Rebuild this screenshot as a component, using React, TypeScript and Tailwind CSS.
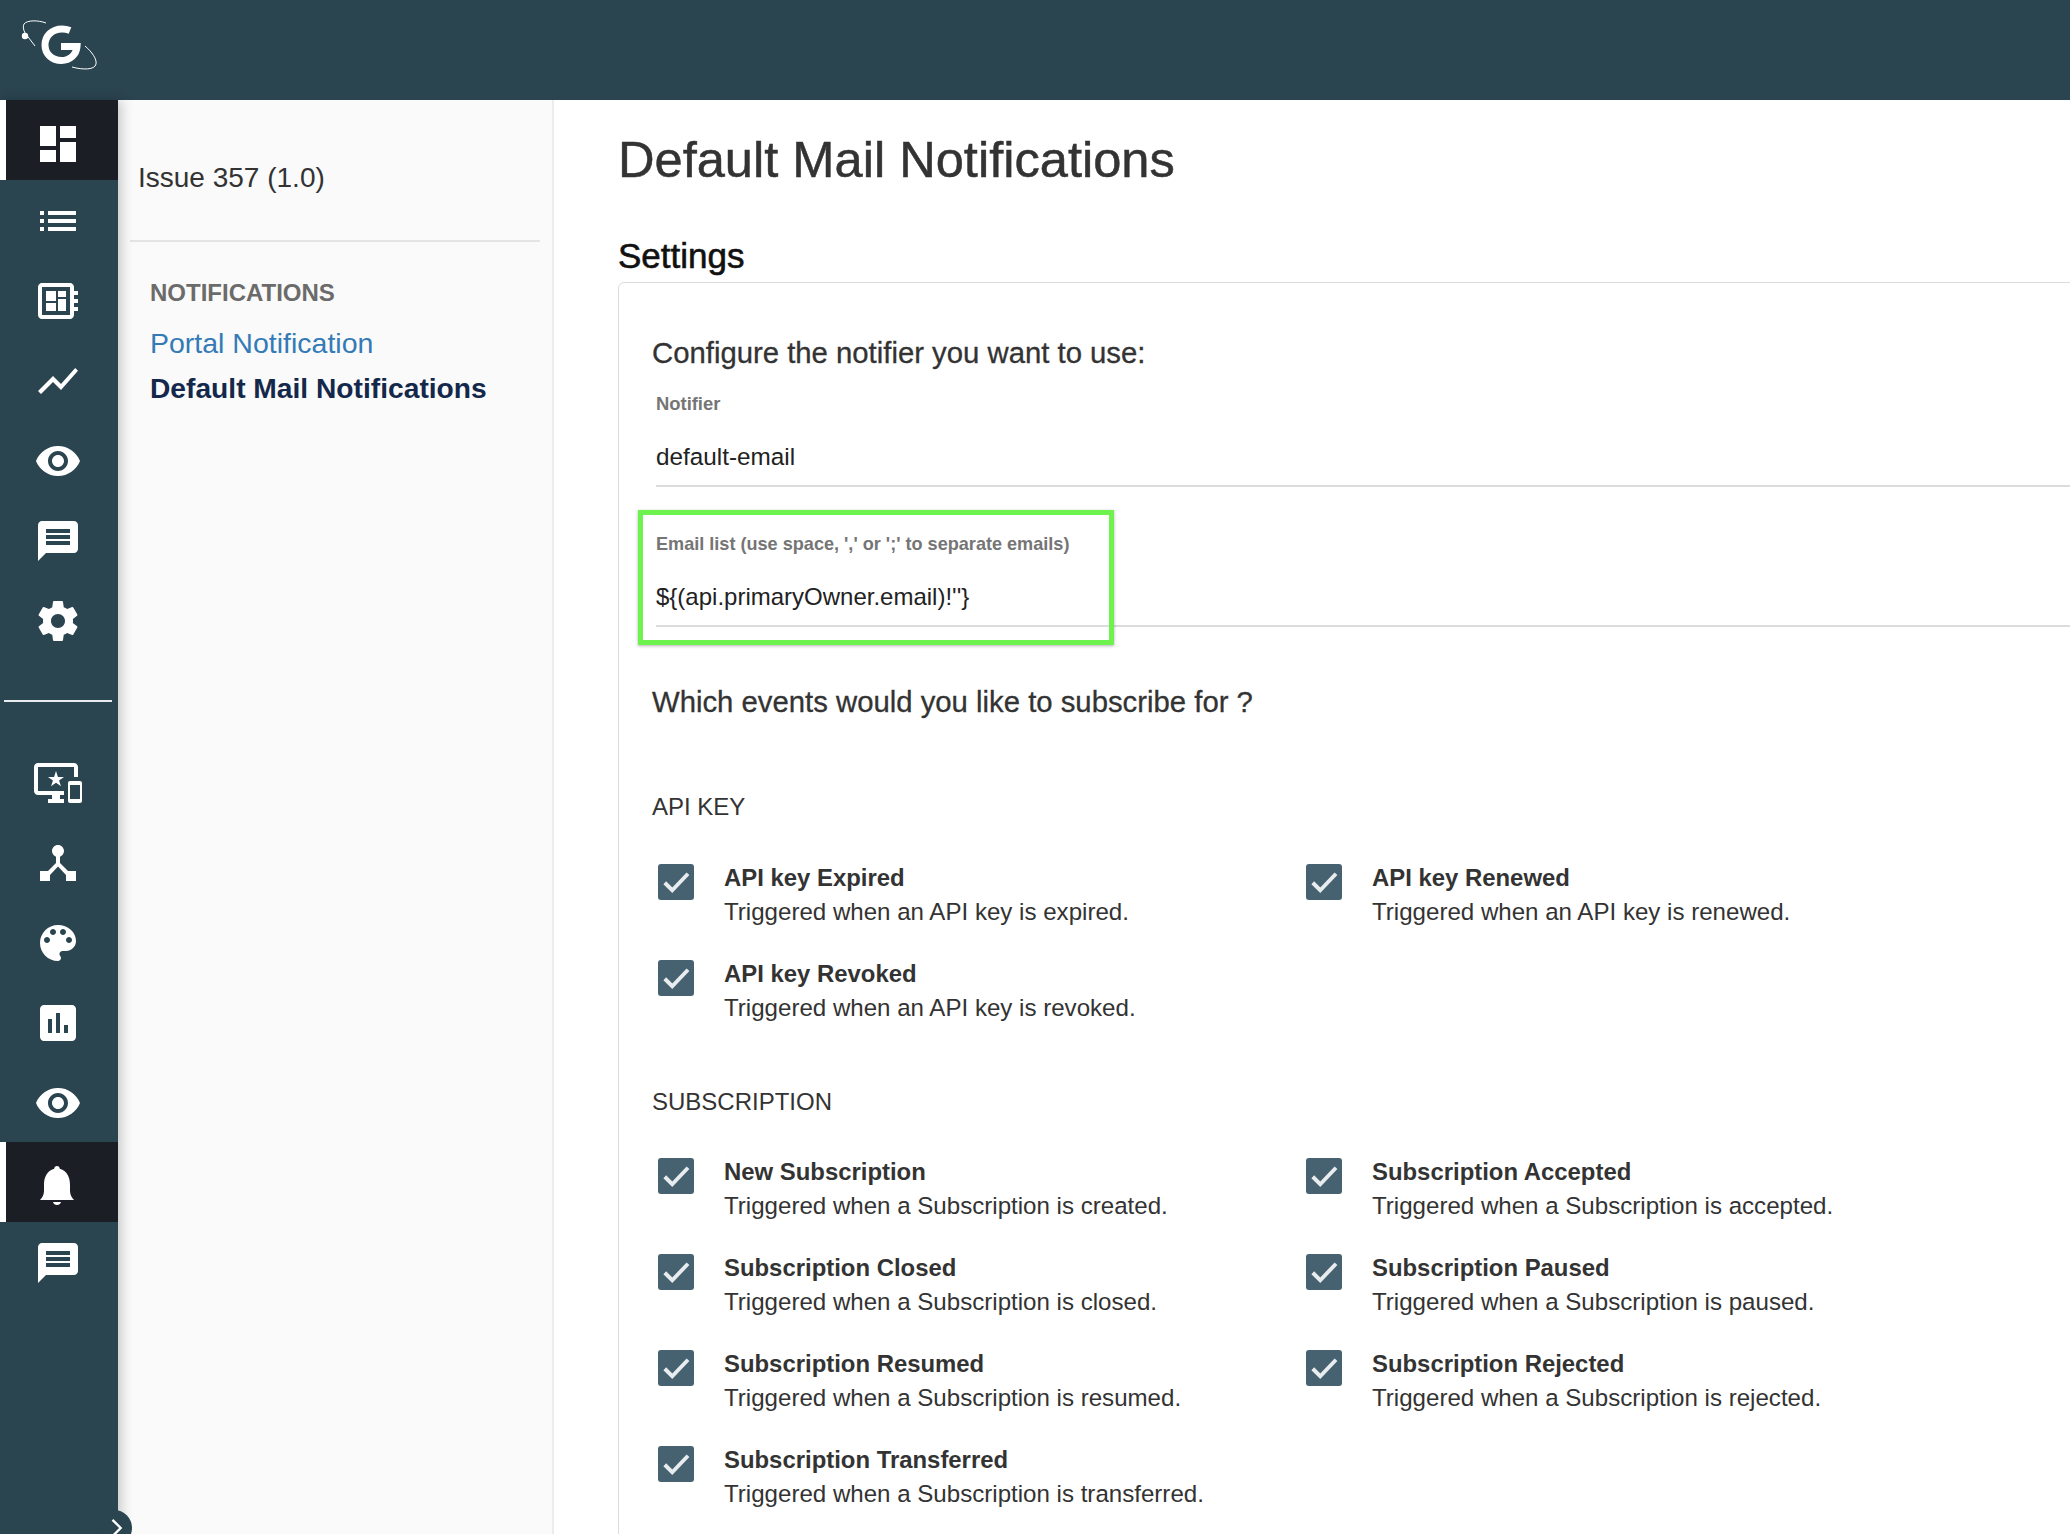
import React from "react";

const paths = {
  dashboard: "M3 13h8V3H3v10zm0 8h8v-6H3v6zm10 0h8V11h-8v10zm0-18v6h8V3h-8z",
  list: "M3 13h2v-2H3v2zm0 4h2v-2H3v2zm0-8h2V7H3v2zm4 4h14v-2H7v2zm0 4h14v-2H7v2zM7 7v2h14V7H7z",
  board: "M22 9V7h-2V5c0-1.1-.9-2-2-2H4c-1.1 0-2 .9-2 2v14c0 1.1.9 2 2 2h14c1.1 0 2-.9 2-2v-2h2v-2h-2v-2h2v-2h-2V9h2zm-4 10H4V5h14v14zM6 13h5v4H6zm6-6h4v3h-4zM6 7h5v5H6zm6 4h4v6h-4z",
  chart: "M3.5 18.49l6-6.01 4 4L22 6.92l-1.41-1.41-7.09 7.97-4-4L2 16.99z",
  eye: "M12 4.5C7 4.5 2.73 7.61 1 12c1.73 4.39 6 7.5 11 7.5s9.27-3.11 11-7.5c-1.73-4.39-6-7.5-11-7.5zM12 17c-2.76 0-5-2.24-5-5s2.24-5 5-5 5 2.24 5 5-2.24 5-5 5zm0-8c-1.66 0-3 1.34-3 3s1.34 3 3 3 3-1.34 3-3-1.34-3-3-3z",
  message: "M20 2H4c-1.1 0-1.99.9-1.99 2L2 22l4-4h14c1.1 0 2-.9 2-2V4c0-1.1-.9-2-2-2zm-2 12H6v-2h12v2zm0-3H6V9h12v2zm0-3H6V6h12v2z",
  settings: "M19.43 12.98c.04-.32.07-.64.07-.98s-.03-.66-.07-.98l2.11-1.65c.19-.15.24-.42.12-.64l-2-3.46c-.12-.22-.39-.3-.61-.22l-2.49 1c-.52-.4-1.08-.73-1.69-.98l-.38-2.65C14.46 2.18 14.25 2 14 2h-4c-.25 0-.46.18-.49.42l-.38 2.65c-.61.25-1.17.59-1.69.98l-2.49-1c-.23-.09-.49 0-.61.22l-2 3.46c-.13.22-.07.49.12.64l2.11 1.65c-.04.32-.07.65-.07.98s.03.66.07.98l-2.11 1.65c-.19.15-.24.42-.12.64l2 3.46c.12.22.39.3.61.22l2.49-1c.52.4 1.08.73 1.69.98l.38 2.65c.03.24.24.42.49.42h4c.25 0 .46-.18.49-.42l.38-2.65c.61-.25 1.17-.59 1.69-.98l2.49 1c.23.09.49 0 .61-.22l2-3.46c.12-.22.07-.49-.12-.64l-2.11-1.65zM12 15.5c-1.93 0-3.5-1.57-3.5-3.5s1.57-3.5 3.5-3.5 3.5 1.57 3.5 3.5-1.57 3.5-3.5 3.5z",
  devices: "M23 11.01L18 11c-.55 0-1 .45-1 1v9c0 .55.45 1 1 1h5c.55 0 1-.45 1-1v-9c0-.55-.45-1-1-1zM23 20h-5v-7h5v7zM20 2H2C.89 2 0 2.89 0 4v12c0 1.1.89 2 2 2h7v2H7v2h8v-2h-2v-2h2v-2H2V4h18v5h2V4c0-1.11-.9-2-2-2zm-8.03 7L11 6l-.97 3H7l2.47 1.76-.94 2.91 2.47-1.8 2.47 1.8-.94-2.91L15 9h-3.03z",
  hub: "M17 16l-4-4V8.82C14.16 8.4 15 7.3 15 6c0-1.66-1.34-3-3-3S9 4.34 9 6c0 1.3.84 2.4 2 2.82V12l-4 4H3v5h5v-3.05l4-4.2 4 4.2V21h5v-5h-4z",
  palette: "M12 3c-4.97 0-9 4.03-9 9s4.03 9 9 9c.83 0 1.5-.67 1.5-1.5 0-.39-.15-.74-.39-1.01-.23-.26-.38-.61-.38-.99 0-.83.67-1.5 1.5-1.5H16c2.76 0 5-2.24 5-5 0-4.42-4.03-8-9-8zm-5.5 9c-.83 0-1.5-.67-1.5-1.5S5.67 9 6.5 9 8 9.67 8 10.5 7.33 12 6.5 12zm3-4C8.67 8 8 7.33 8 6.5S8.67 5 9.5 5s1.5.67 1.5 1.5S10.33 8 9.5 8zm5 0c-.83 0-1.5-.67-1.5-1.5S13.67 5 14.5 5s1.5.67 1.5 1.5S15.33 8 14.5 8zm3 4c-.83 0-1.5-.67-1.5-1.5S16.67 9 17.5 9s1.5.67 1.5 1.5-.67 1.5-1.5 1.5z",
  assessment: "M19 3H5c-1.1 0-2 .9-2 2v14c0 1.1.9 2 2 2h14c1.1 0 2-.9 2-2V5c0-1.1-.9-2-2-2zM9 17H7v-7h2v7zm4 0h-2V7h2v10zm4 0h-2v-4h2v4z",
};

function Icon({ d }: { d: string }) {
  return (
    <svg viewBox="0 0 24 24" className="w-12 h-12 text-white fill-current">
      <path d={d} />
    </svg>
  );
}

function Bell() {
  return (
    <svg viewBox="0 0 48 48" className="w-12 h-12 text-white fill-current">
      <path d="M23 8c1.6 0 2.8 1.2 2.8 2.8C33 13 36 19 36 27v6c0 4 2 7 4 9H6c2-2 4-5 4-9v-6c0-8 3-14 10.2-16.2C20.2 9.2 21.4 8 23 8z" />
      <path d="M19 44h8c-.5 2-2 3-4 3s-3.5-1-4-3z" />
    </svg>
  );
}

function NavRow({ active, h, pt, children }: { active?: boolean; h?: string; pt?: string; children: React.ReactNode }) {
  return (
    <div
      className={
        (h ?? "h-20") +
        " flex items-center justify-center " +
        (pt ?? "") +
        " " +
        (active ? "bg-[#1c1e26] border-l-[6px] border-white pr-[8px]" : "pr-[2px]")
      }
    >
      {children}
    </div>
  );
}

function Check() {
  return (
    <div className="w-9 h-9 shrink-0 rounded-[3px] bg-[#466270] flex items-center justify-center">
      <svg viewBox="0 0 24 24" className="w-9 h-9 fill-none stroke-[#e8ecee] stroke-[2.6]">
        <path d="M4.5 12.5l5 5L20 6.5" />
      </svg>
    </div>
  );
}

function Item({ title, desc }: { title: string; desc: string }) {
  return (
    <div className="h-24 flex gap-[30px] pl-[6px]">
      <div className="pt-[1px]">
        <Check />
      </div>
      <div className="-mt-[2px]">
        <div className="text-[23.9px] leading-[34px] font-bold text-[#333]">{title}</div>
        <div className="text-[24.1px] leading-[34px] text-[#333]">{desc}</div>
      </div>
    </div>
  );
}

function Field({ label, value, labelSize, valueSize }: { label: string; value: string; labelSize: string; valueSize: string }) {
  return (
    <div className="pl-1">
      <div className={labelSize + " leading-[24px] font-bold text-[#757575]"}>{label}</div>
      <div className={valueSize + " mt-[25px] pb-[12px] leading-[32px] text-[#222] border-b-2 border-[#dcdcdc]"}>{value}</div>
    </div>
  );
}

export default function App() {
  return (
    <div className="w-[2070px] h-[1534px] overflow-hidden bg-white font-['Liberation_Sans',Arial,sans-serif] flex flex-col">
      <header className="h-[100px] shrink-0 bg-[#2a4450]">
        <svg viewBox="0 0 100 100" className="w-[100px] h-[100px] fill-none stroke-white">
          <path d="M46 23C38 20 27 20 24 24c-1 2-1 5 1 9l10 13" strokeWidth="1" />
          <circle cx="25" cy="36" r="3.2" fill="white" stroke="none" />
          <path d="M85 46c7 6 12 13 11 18-1 6-13 6-24 3" strokeWidth="1" />
          <path d="M70 30.5c-2.500-1-5-1.500-8-1.500-10 0-17 7-17 16s7 15.500 16.500 15.500c8.500 0 15-6 15.500-14H61" strokeWidth="7" />
        </svg>
      </header>
      <div className="flex-1 flex min-h-0">
        <nav className="relative z-10 w-[118px] shrink-0 bg-[#2a4450] shadow-[3px_0_12px_rgba(0,0,0,0.22)]">
          <NavRow active pt="pt-[8px]"><Icon d={paths.dashboard} /></NavRow>
          <NavRow pt="pt-[2px]"><Icon d={paths.list} /></NavRow>
          <NavRow pt="pt-[2px]"><Icon d={paths.board} /></NavRow>
          <NavRow pt="pt-[2px]"><Icon d={paths.chart} /></NavRow>
          <NavRow pt="pt-[2px]"><Icon d={paths.eye} /></NavRow>
          <NavRow pt="pt-[2px]"><Icon d={paths.message} /></NavRow>
          <NavRow pt="pt-[2px]"><Icon d={paths.settings} /></NavRow>
          <div className="mt-10 mb-[41px] ml-1 mr-[6px] h-[2px] bg-[#e8ecee]" />
          <NavRow><Icon d={paths.devices} /></NavRow>
          <NavRow><Icon d={paths.hub} /></NavRow>
          <NavRow><Icon d={paths.palette} /></NavRow>
          <NavRow><Icon d={paths.assessment} /></NavRow>
          <NavRow h="h-[79px]"><Icon d={paths.eye} /></NavRow>
          <NavRow active><Bell /></NavRow>
          <NavRow pt="pt-[1px]"><Icon d={paths.message} /></NavRow>
          <div className="absolute left-[96px] bottom-[-12px] w-9 h-9 rounded-full bg-[#2a4450] flex items-center justify-center">
            <svg viewBox="0 0 24 24" className="w-7 h-7 ml-1 fill-none stroke-white stroke-2">
              <path d="M9 5l7 7-7 7" />
            </svg>
          </div>
        </nav>

        <aside className="w-[436px] shrink-0 bg-[#fafafa] border-r-2 border-[#ececec] pl-3 pr-3">
          <div className="h-[142px] border-b-2 border-[#e4e4e4] pl-2 pt-[61px] text-[28px] leading-[34px] text-[#333]">
            Issue 357 (1.0)
          </div>
          <div className="pl-5 pt-[37px]">
            <div className="text-[24px] leading-[28px] font-bold text-[#6b6b6b]">NOTIFICATIONS</div>
            <div className="mt-[14px] text-[28.5px] leading-[45px] text-[#337ab7]">Portal Notification</div>
            <div className="text-[28.2px] leading-[45px] font-bold text-[#14284b]">Default Mail Notifications</div>
          </div>
        </aside>

        <main className="flex-1 min-w-0 overflow-hidden pl-16">
          <h1 className="mt-[30px] text-[50.6px] leading-[60px] text-[#333] [-webkit-text-stroke:0.5px_#333]">Default Mail Notifications</h1>
          <h2 className="mt-[46px] text-[35px] leading-[40px] text-[#111] [-webkit-text-stroke:0.6px_#111]">Settings</h2>
          <section className="mt-[6px] w-[1600px] rounded-t-md border border-[#dcdcdc] pl-[33px] pt-[53px] pb-40">
            <div className="text-[29.3px] leading-[34px] text-[#333] [-webkit-text-stroke:0.3px_#333]">Configure the notifier you want to use:</div>
            <div className="mt-[22px]">
              <Field labelSize="text-[18.4px]" valueSize="text-[24.3px]" label="Notifier" value="default-email" />
            </div>
            <div className="relative mt-[45px]">
              <Field labelSize="text-[18.1px]" valueSize="text-[24px]" label="Email list (use space, ',' or ';' to separate emails)" value="${(api.primaryOwner.email)!''}" />
              <div className="absolute left-[-14px] top-[-22px] w-[476px] h-[135px] border-[5px] border-[#6ef34e] shadow-[0_1px_3px_rgba(0,0,0,0.3)]" />
            </div>
            <div className="mt-[58px] text-[29.3px] leading-[34px] text-[#333] [-webkit-text-stroke:0.3px_#333]">Which events would you like to subscribe for ?</div>
            <div className="mt-[71px] text-[24px] leading-[34px] text-[#333]">API KEY</div>
            <div className="mt-[39px] grid grid-cols-[648px_648px]">
              <Item title="API key Expired" desc="Triggered when an API key is expired." />
              <Item title="API key Renewed" desc="Triggered when an API key is renewed." />
              <Item title="API key Revoked" desc="Triggered when an API key is revoked." />
            </div>
            <div className="mt-[30px] text-[24px] leading-[34px] text-[#333]">SUBSCRIPTION</div>
            <div className="mt-[38px] grid grid-cols-[648px_648px]">
              <Item title="New Subscription" desc="Triggered when a Subscription is created." />
              <Item title="Subscription Accepted" desc="Triggered when a Subscription is accepted." />
              <Item title="Subscription Closed" desc="Triggered when a Subscription is closed." />
              <Item title="Subscription Paused" desc="Triggered when a Subscription is paused." />
              <Item title="Subscription Resumed" desc="Triggered when a Subscription is resumed." />
              <Item title="Subscription Rejected" desc="Triggered when a Subscription is rejected." />
              <Item title="Subscription Transferred" desc="Triggered when a Subscription is transferred." />
            </div>
          </section>
        </main>
      </div>
    </div>
  );
}
